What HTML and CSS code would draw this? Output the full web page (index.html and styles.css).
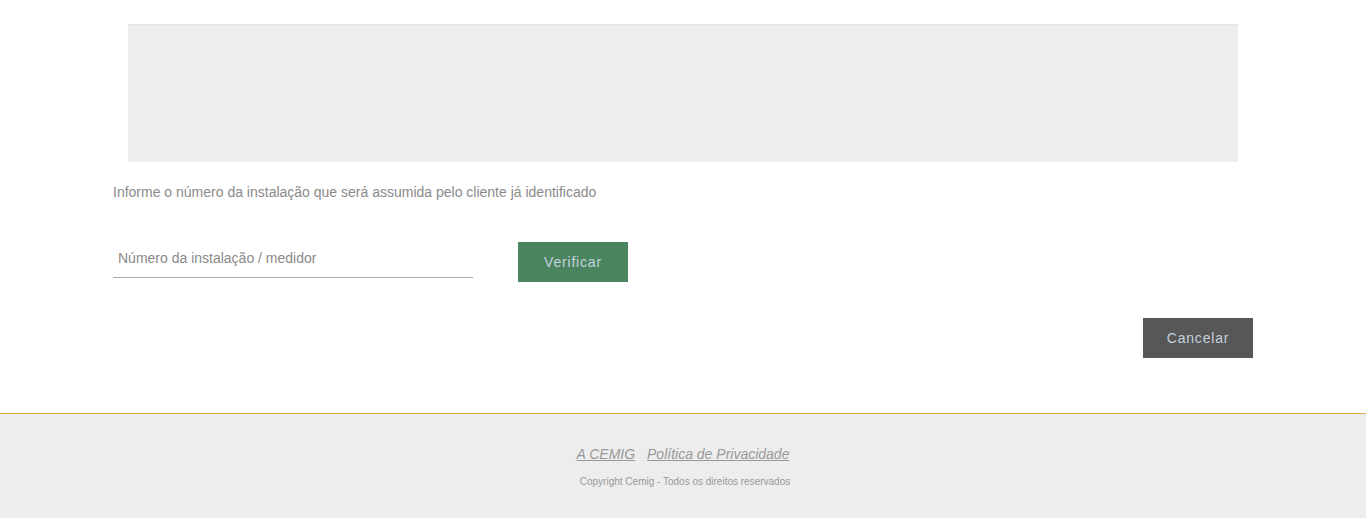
FILE: index.html
```html
<!DOCTYPE html>
<html lang="pt-BR">
<head>
  <meta charset="UTF-8">
  <meta name="viewport" content="width=device-width, initial-scale=1.0">
  <title>Cemig - Troca de titularidade</title>
  <link rel="stylesheet" href="styles.css">
</head>
<body>

  <div class="container">
    <div class="banner"></div>

    <p class="info">Informe o número da instalação que será assumida pelo cliente já identificado</p>

    <form class="search-row">
      <input type="text" class="field" placeholder="Número da instalação / medidor">
      <button type="button" class="btn btn-green">Verificar</button>
    </form>

    <div class="actions">
      <button type="button" class="btn btn-dark">Cancelar</button>
    </div>
  </div>

  <footer class="footer">
    <div class="footer-links">
      <a href="#">A CEMIG</a>
      <a href="#">Política de Privacidade</a>
    </div>
    <div class="copyright">Copyright Cemig - Todos os direitos reservados</div>
  </footer>

</body>
</html>
```

FILE: styles.css
```css
body {
  margin: 0;
  font-family: "Liberation Sans", Arial, sans-serif;
  font-size: 14px;
  color: #888;
  background: #fff;
}

.container {
  width: 1140px;
  margin: 0 auto;
}

.banner {
  height: 137px;
  margin: 24px 15px 0;
  background-color: #ededed;
  border-top: 1px solid #e4e4e4;
}

.info {
  margin: 20px 0 0;
  line-height: 20px;
  color: #8a8a8a;
}

.search-row {
  display: flex;
  align-items: flex-end;
  gap: 45px;
  margin-top: 37px;
}

.field {
  width: 360px;
  height: 39px;
  padding: 0 5px;
  box-sizing: border-box;
  border: none;
  border-bottom: 1px solid #aaa;
  font-family: inherit;
  font-size: 14px;
  color: #555;
  outline: none;
  margin-bottom: 4px;
}

.field::placeholder {
  color: #8a8a8a;
}

.btn {
  width: 110px;
  height: 40px;
  border: none;
  font-family: inherit;
  font-size: 14px;
  letter-spacing: 0.8px;
  color: #c5d0de;
  cursor: pointer;
}

.btn-green {
  background-color: #4a8560;
}

.btn-dark {
  background-color: #575757;
}

.actions {
  display: flex;
  justify-content: flex-end;
  margin-top: 36px;
}

.footer {
  margin-top: 55px;
  height: 105px;
  background-color: #ededed;
  border-top: 1px solid #e0aa48;
  text-align: center;
}

.footer-links {
  padding-top: 31px;
  line-height: 18px;
}

.footer-links a {
  color: #999;
  font-style: italic;
  margin: 0 4px;
}

.copyright {
  margin-top: 12px;
  padding-left: 4px;
  font-size: 10px;
  line-height: 14px;
  color: #999;
}
```
